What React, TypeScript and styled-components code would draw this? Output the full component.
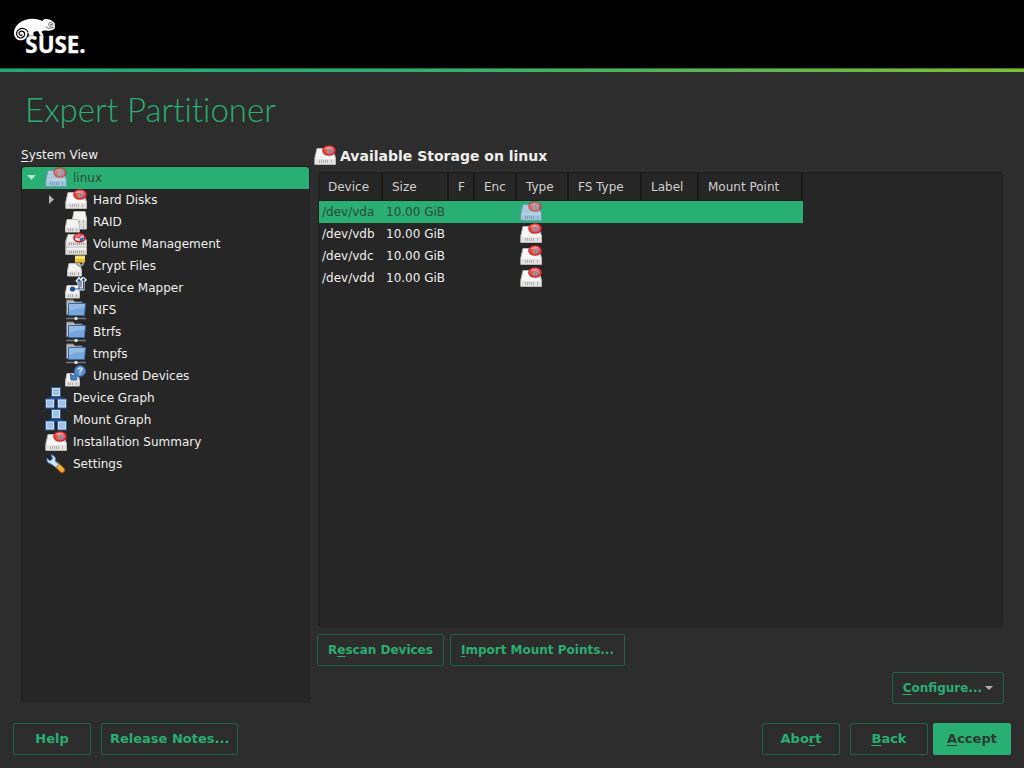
import React, { useState } from "react";
import type { ReactNode } from "react";
import styled, { createGlobalStyle, css } from "styled-components";

const colors = {
  green: "#29ae73",
  outline: "#1b6349",
  page: "#2d2d2d",
  panel: "#262626",
  line: "#1a1a1a",
  text: "#eeeeec",
};

const GlobalStyle = createGlobalStyle`
  * { box-sizing: border-box; }
  body {
    margin: 0;
    background: ${colors.page};
    color: ${colors.text};
    font-family: "DejaVu Sans", sans-serif;
    font-size: 13px;
    line-height: 16px;
  }
`;

const Page = styled.div`
  display: flex;
  flex-direction: column;
  min-height: 100vh;
`;

const Banner = styled.header`
  display: flex;
  height: 72px;
  padding: 18px 14px 0;
  background:
    linear-gradient(rgba(0, 0, 0, 0.4), rgba(0, 0, 0, 0.4)) 0 68px / 100% 1px no-repeat,
    linear-gradient(to right, #21a97c, #2fae74 40%, #82bf33) 0 68px / 100% 4px no-repeat,
    #000;
`;

const Title = styled.h1`
  margin: 0;
  padding: 17px 25px 18px;
  color: ${colors.green};
  font-family: Lato, sans-serif;
  font-size: 33px;
  font-weight: 300;
  font-variant-ligatures: none;
  line-height: 40px;
`;

const Content = styled.main`
  flex: 1;
  display: grid;
  grid-template-columns: minmax(0, 289fr) minmax(0, 685fr);
  gap: 8px;
  padding: 0 21px 20px;
`;

const Column = styled.section`
  display: flex;
  flex-direction: column;
`;

const TreeLabel = styled.h2`
  margin: 0 0 3px;
  font-size: 12px;
  font-weight: 400;
  line-height: 16px;
`;

const Heading = styled.h2`
  display: flex;
  align-items: center;
  gap: 4px;
  margin: -2px 0 5px -4px;
  font-size: 14px;
  line-height: 22px;
`;

const Panel = styled.div`
  flex: 1;
  background: ${colors.panel};
  border: 1px solid ${colors.line};
  border-right-color: #232323;
  border-bottom-color: #232323;
  border-radius: 4px;
  overflow: hidden;
`;

const Tree = styled.ul`
  margin: 0;
  padding: 0;
  list-style: none;
`;

const TreeRow = styled.div<{ $depth: number; $selected?: boolean }>`
  display: flex;
  align-items: center;
  height: 22px;
  padding-left: ${(p) => p.$depth * 20 + 3}px;
  font-size: 12px;
  ${(p) =>
    p.$selected &&
    css`
      background: ${colors.green};
      color: #2d4a3c;
    `}
`;

const Toggle = styled.button`
  display: flex;
  justify-content: center;
  width: 14px;
  height: 22px;
  padding: 0;
  border: 0;
  background: none;
  color: #bdbdbd;
  align-items: center;
`;

const Spacer = styled.span`
  width: 14px;
`;

const Glyph = styled.svg`
  display: block;
  flex: none;
  width: 22px;
  height: 22px;
`;

const NodeIcon = styled.span`
  margin: 0 6px;
`;

const Table = styled.table`
  width: 484px;
  table-layout: fixed;
  border-collapse: separate;
  border-spacing: 0;
  font-size: 12px;
`;

const HeadCell = styled.th<{ $width: number }>`
  width: ${(p) => p.$width}px;
  height: 28px;
  padding: 0 0 0 9px;
  border-right: 2px solid ${colors.line};
  border-bottom: 1px solid ${colors.line};
  color: #cfcfcd;
  font-weight: 400;
  text-align: left;
  white-space: nowrap;
`;

const BodyRow = styled.tr<{ $selected: boolean }>`
  background: ${(p) => (p.$selected ? colors.green : "transparent")};
  color: ${(p) => (p.$selected ? "#2d4a3c" : colors.text)};
`;

const Cell = styled.td`
  height: 22px;
  padding: 0 0 0 3px;
  white-space: nowrap;
`;

const Bar = styled.div<{ $end?: boolean }>`
  display: flex;
  gap: 6px;
  justify-content: ${(p) => (p.$end ? "flex-end" : "flex-start")};
  margin: ${(p) => (p.$end ? "6px -1px -1px" : "7px -1px 0")};
`;

const Footer = styled.footer`
  display: flex;
  gap: 10px;
  padding: 0 13px 13px;
`;

const FooterGap = styled.span`
  flex: 1;
`;

const PrimaryGroup = styled.div`
  display: flex;
  gap: 5px;
`;

const Button = styled.button<{ $primary?: boolean; $compact?: boolean }>`
  display: flex;
  align-items: center;
  justify-content: center;
  gap: 3px;
  height: 32px;
  min-width: 78px;
  padding: 0 ${(p) => (p.$compact ? 10 : 8)}px;
  border: 1px solid ${(p) => (p.$primary ? colors.green : colors.outline)};
  border-radius: 2px;
  background: ${(p) => (p.$primary ? colors.green : "transparent")};
  color: ${(p) => (p.$primary ? "#2d3a33" : colors.green)};
  font-family: "DejaVu Sans", sans-serif;
  font-size: ${(p) => (p.$compact ? 12 : 13)}px;
  font-weight: 700;
  line-height: 16px;
  white-space: nowrap;
`;

const Key = styled.span`
  text-decoration: underline;
  text-decoration-thickness: 1px;
  text-underline-offset: 2px;
  text-decoration-skip-ink: none;
`;

const SuseLogo = () => (
  <svg width="76" height="44" viewBox="42 54 228 132" role="img" aria-label="SUSE">
    <path
      fill="#fff"
      d="M42 98C42 76 66 56 97 56C111 56 119 60 128 63L132 57C146 56 160 62 164 70L165 84C160 91 151 93 141 92C132 91 126 93 125 96C126 101 131 102 130 107L122 107C118 104 117 97 114 94C107 93 101 95 100 98L101 107L86 107C88 102 86 98 83 97L82 102C82 113 74 121 63 121C51 121 42 112 42 98Z"
    />
    <path
      fill="none"
      stroke="#000"
      strokeWidth="3.5"
      d="M84 96C79 86 68 83 59 87C48 92 47 105 54 111C61 117 73 113 74 103C75 94 63 90 58 97C54 103 62 109 67 104"
    />
    <circle cx="152" cy="73" r="6" fill="#fff" stroke="#000" strokeWidth="1.6" />
    <circle cx="153" cy="73" r="2" />
    <path d="M137 80C145 87 154 85 162 81" fill="none" stroke="#000" strokeWidth="1.8" />
    <text x="76" y="158" fill="#fff" stroke="#fff" strokeWidth="1" fontFamily="Open Sans, sans-serif" fontWeight="700" fontSize="67">
      SUSE.
    </text>
  </svg>
);

type IconName =
  | "disk" | "diskSelected" | "raid" | "volume" | "crypt"
  | "mapper" | "folder" | "unused" | "graph" | "wrench";

const Lid = () => (
  <>
    <ellipse cx="15" cy="5.5" rx="6.8" ry="5.2" fill="#d3232a" />
    <ellipse cx="15" cy="5.2" rx="5.6" ry="4.2" fill="#f0474b" />
    <path d="M10 4Q14 0 19 3Q16 5 10 4Z" fill="#fa9a9a" />
    <path d="M15.500 5.500V2.500Q19 3 20 5.500Z" fill="#c98a9a" />
    <path d="M12.500 5.500L15 4.500V9Q12.500 8 12.500 5.500Z" fill="#8fae5d" />
    <path d="M15.500 5.500H19Q18 8.500 15.500 8.500Z" fill="#6c97d8" />
  </>
);

const Drive = ({ tint = false }: { tint?: boolean }) => (
  <>
    <path d="M3 3.500H18.500L21.500 13V19.500H.8V13Z" fill={tint ? "#a9cbde" : "#f6f6f5"} stroke={tint ? "#6f9ab0" : "#bcbab8"} />
    <path d="M1.500 13.500H21V19H1.500Z" fill={tint ? "#a0c4d8" : "#e4e3e2"} />
    <path d="M2 13H20.500" stroke={tint ? "#c3dcea" : "#fff"} />
    <path d="M5.500 15V18M7.500 15V18M9.500 15V18M11.500 15V18M13.500 15V18M17.500 15V18" stroke={tint ? "#7d9fb2" : "#b3b1af"} />
  </>
);

const MiniDrive = ({ x, y }: { x: number; y: number }) => (
  <g transform={`translate(${x} ${y})`}>
    <path d="M2 .5H13L14.500 8V13H.5V8Z" fill="#f3f3f2" stroke="#c3c1bf" />
    <path d="M1 8.500H14V12.500H1Z" fill="#e2e1df" />
    <path d="M3.500 9.500V12M5.500 9.500V12M7.500 9.500V12M11.500 9.500V12" stroke="#aaa8a6" />
  </g>
);

const Node = ({ x, y }: { x: number; y: number }) => (
  <>
    <rect x={x} y={y} width="9" height="9" fill="#cfe1f4" stroke="#2b5c9c" />
    <rect x={x + 1.5} y={y + 1.5} width="6" height="6" fill="#9dc0e6" />
  </>
);

const art: Record<IconName, ReactNode> = {
  disk: (<><Drive /><Lid /></>),
  diskSelected: (<><Drive tint /><g opacity=".68"><Lid /></g></>),
  raid: (<><MiniDrive x={7} y={5} /><MiniDrive x={7} y={0} /><MiniDrive x={0} y={8} /></>),
  volume: (
    <>
      <path d="M3 1.500H18.500L21.500 8V21.500H.8V8Z" fill="#f1f1f0" stroke="#b5b3b1" />
      <path d="M1.500 9H21V12.500H1.500ZM1.500 17H21V21H1.500Z" fill="#dbdad8" />
      <path d="M1 14H21" stroke="#b9b7b5" />
      <path d="M4 10.800H19M4 19H19" stroke="#a5a3a1" strokeWidth="2.400" strokeDasharray="1 1" />
      <ellipse cx="14.500" cy="4.800" rx="5.500" ry="4" fill="#eee" stroke="#c4161c" strokeWidth="1.600" />
      <path d="M9.500 4.800Q12 1 18 2.300L14 5.500Z" fill="#ef5155" />
      <path d="M14.500 5.500L19 4Q19 8 15 8.500Z" fill="#3566ac" />
    </>
  ),
  crypt: (
    <>
      <MiniDrive x={2} y={8} />
      <path d="M10 .5H20V7.500H10Z" fill="#edc31f" />
      <path d="M10 2.500H20" stroke="#fff0a0" strokeWidth="2" />
      <path d="M12 7V9Q15 13 18 9V7" fill="none" stroke="#999b91" strokeWidth="2" />
    </>
  ),
  mapper: (
    <>
      <MiniDrive x={0} y={8} />
      <path d="M8 12H14V3M11.500 5L14 2L15.500 4M14 12H18V2M16.500 4L18 1L21 4" fill="none" stroke="#fff" strokeWidth="3" />
      <path d="M8 12H14V2.500M12.500 4.500L14 2.500L15.500 4.500M14 12H18.500V1.500M17 3.500L18.500 1.500L20 3.500" fill="none" stroke="#20529a" strokeWidth="1.200" />
      <circle cx="7.500" cy="12" r="2.600" fill="#20529a" />
    </>
  ),
  folder: (
    <>
      <path d="M1.500 16V1H8L10 3H17V6" fill="#b9b8b6" stroke="#777" />
      <path d="M3 4V16" stroke="#ddd" strokeDasharray="1 1" />
      <path d="M3.500 4.500H20.500L19.500 16.500H3.500Z" fill="#78a7dc" stroke="#3769a8" />
      <path d="M4 5H19.500L19.200 9Q11 9 4 12Z" fill="#93b9e5" />
      <path d="M1 19.500H21" stroke="#777" strokeWidth="1.500" />
      <circle cx="11" cy="19.500" r="1.700" fill="#ddd" />
    </>
  ),
  unused: (
    <>
      <MiniDrive x={0} y={8} />
      <path d="M12 7L15 10L11.500 12.500L12 15H6L5.500 9L8 10.500Z" fill="#4a7fbf" stroke="#356dae" />
      <circle cx="15" cy="6" r="5.500" fill="#5c8fca" stroke="#2e62a0" />
      <path d="M13 4.500Q15 1.500 17 4Q17 5.500 15 6.500V7.500M15 8.500V9.500" fill="none" stroke="#e4effa" strokeWidth="1.300" />
    </>
  ),
  graph: (
    <>
      <path d="M11 9V12M5 13V11.500H17V13" fill="none" stroke="#1f4e8a" strokeWidth="2" />
      <Node x={6.5} y={0.5} /><Node x={0.5} y={12} /><Node x={12.5} y={12} />
    </>
  ),
  wrench: (
    <>
      <path d="M12 12L17 17" stroke="#ae6811" strokeWidth="6" strokeLinecap="round" />
      <path d="M12 12L17 17" stroke="#f9a526" strokeWidth="4.400" strokeLinecap="round" />
      <path d="M13.500 12.500L17 16" stroke="#ffd98b" strokeLinecap="round" />
      <path d="M2 5Q1 10 6 11L11 14.500L14 11.500L10.500 8Q11.500 3 6 1.500L7.500 5.500L5 8Z" fill="#c7def4" stroke="#3d72b3" strokeLinejoin="round" />
      <path d="M6 9L11 13" stroke="#fff" />
    </>
  ),
};

const Icon = ({ name }: { name: IconName }) => (
  <Glyph viewBox="0 0 22 22" aria-hidden="true">{art[name]}</Glyph>
);

const Arrow = ({ open }: { open: boolean }) => (
  <svg width="10" height="10" viewBox="0 0 10 10" aria-hidden="true">
    <path d={open ? "M0 2H9L4.500 7Z" : "M2 0V9L7 4.500Z"} fill={open ? "#b9e3cf" : "#b3b3b3"} />
  </svg>
);

type Item = { label: string; icon: IconName; depth: number; expandable?: boolean };

const items: Item[] = [
  { label: "Hard Disks", icon: "disk", depth: 1, expandable: true },
  { label: "RAID", icon: "raid", depth: 1 },
  { label: "Volume Management", icon: "volume", depth: 1 },
  { label: "Crypt Files", icon: "crypt", depth: 1 },
  { label: "Device Mapper", icon: "mapper", depth: 1 },
  { label: "NFS", icon: "folder", depth: 1 },
  { label: "Btrfs", icon: "folder", depth: 1 },
  { label: "tmpfs", icon: "folder", depth: 1 },
  { label: "Unused Devices", icon: "unused", depth: 1 },
  { label: "Device Graph", icon: "graph", depth: 0 },
  { label: "Mount Graph", icon: "graph", depth: 0 },
  { label: "Installation Summary", icon: "disk", depth: 0 },
  { label: "Settings", icon: "wrench", depth: 0 },
];

const headers: [string, number][] = [
  ["Device", 64], ["Size", 66], ["F", 26], ["Enc", 42],
  ["Type", 52], ["FS Type", 73], ["Label", 57], ["Mount Point", 104],
];

const devices = ["/dev/vda", "/dev/vdb", "/dev/vdc", "/dev/vdd"];

export default function App() {
  const [open, setOpen] = useState(true);
  const [selected, setSelected] = useState(devices[0]);
  const visible = items.filter((item) => open || item.depth === 0);

  return (
    <>
      <GlobalStyle />
      <Page>
        <Banner><SuseLogo /></Banner>
        <Title>Expert Partitioner</Title>
        <Content>
          <Column>
            <TreeLabel id="tree-label"><Key>S</Key>ystem View</TreeLabel>
            <Panel>
              <Tree aria-labelledby="tree-label">
                <li>
                  <TreeRow $depth={0} $selected>
                    <Toggle aria-label="Toggle linux" aria-expanded={open} onClick={() => setOpen(!open)}>
                      <Arrow open={open} />
                    </Toggle>
                    <NodeIcon><Icon name="diskSelected" /></NodeIcon>
                    linux
                  </TreeRow>
                </li>
                {visible.map((item) => (
                  <li key={item.label}>
                    <TreeRow $depth={item.depth}>
                      {item.expandable ? (
                        <Toggle aria-label={`Expand ${item.label}`}><Arrow open={false} /></Toggle>
                      ) : (
                        <Spacer />
                      )}
                      <NodeIcon><Icon name={item.icon} /></NodeIcon>
                      {item.label}
                    </TreeRow>
                  </li>
                ))}
              </Tree>
            </Panel>
          </Column>
          <Column>
            <Heading><Icon name="disk" />Available Storage on linux</Heading>
            <Panel>
              <Table>
                <thead>
                  <tr>
                    {headers.map(([label, width]) => (
                      <HeadCell key={label} $width={width}>{label}</HeadCell>
                    ))}
                  </tr>
                </thead>
                <tbody>
                  {devices.map((device) => (
                    <BodyRow key={device} $selected={device === selected} onClick={() => setSelected(device)}>
                      <Cell>{device}</Cell>
                      <Cell>10.00 GiB</Cell>
                      <Cell />
                      <Cell />
                      <Cell><Icon name={device === selected ? "diskSelected" : "disk"} /></Cell>
                      <Cell />
                      <Cell />
                      <Cell />
                    </BodyRow>
                  ))}
                </tbody>
              </Table>
            </Panel>
            <Bar>
              <Button $compact><span>R<Key>e</Key>scan Devices</span></Button>
              <Button $compact><span><Key>I</Key>mport Mount Points...</span></Button>
            </Bar>
            <Bar $end>
              <Button $compact>
                <span><Key>C</Key>onfigure...</span>
                <svg width="8" height="4" viewBox="0 0 8 4" aria-hidden="true"><path d="M0 0H8L4 4Z" fill="#b3b3b3" /></svg>
              </Button>
            </Bar>
          </Column>
        </Content>
        <Footer>
          <Button>Help</Button>
          <Button>Release Notes...</Button>
          <FooterGap />
          <Button><span>Abo<Key>r</Key>t</span></Button>
          <PrimaryGroup>
            <Button><span><Key>B</Key>ack</span></Button>
            <Button $primary><span><Key>A</Key>ccept</span></Button>
          </PrimaryGroup>
        </Footer>
      </Page>
    </>
  );
}
